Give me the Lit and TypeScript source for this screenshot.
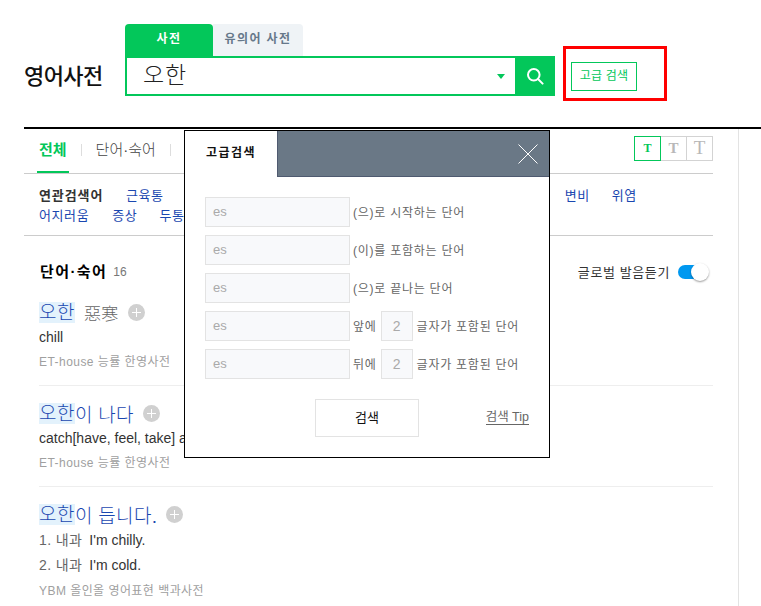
import { LitElement, html, css } from "lit";
import { customElement } from "lit/decorators.js";

@customElement("app-root")
export class AppRoot extends LitElement {
  static styles = css`
    :host { display: block; width: 761px; height: 606px; overflow: hidden; position: relative; background: #fff; font-family: "Liberation Sans","Noto Sans CJK KR",sans-serif; color: #333; }
    * { box-sizing: border-box; }
    .header { height: 127px; padding: 24px 0 0 24px; display: flex; align-items: flex-start; }
    .logo { width: 101px; margin-top: 37px; font-size: 22px; line-height: 32px; font-weight: 500; color: #111; letter-spacing: -0.6px; white-space: nowrap; }
    .tabs { display: flex; height: 32px; }
    .tab { font-size: 12px; font-weight: 700; line-height: 31px; text-align: center; letter-spacing: 1.4px; border-radius: 4px 4px 0 0; }
    .tab.on { width: 88px; background: #03c75a; color: #fff; }
    .tab.off { width: 90px; background: #eff3f6; color: #66788a; border-radius: 0 4px 0 0; }
    .searchrow { display: flex; }
    .box { width: 390px; height: 40px; border: 2px solid #03c75a; border-right: 0; display: flex; align-items: center; padding: 0 10px 0 16px; justify-content: space-between; }
    .query { font-size: 23px; color: #222; line-height: 34px; font-weight: 300; letter-spacing: 0.8px; margin-top: -2px; }
    .caret { width: 0; height: 0; border: 4px solid transparent; border-top: 5px solid #03c75a; border-bottom: 0; }
    .go { width: 40px; height: 40px; background: #03c75a; display: flex; align-items: center; justify-content: center; }
    .annot { margin: 22px 0 0 8px; width: 104px; height: 55px; border: 3px solid #f00; padding: 13px 0 0 5px; }
    .adv { width: 66px; height: 29px; border: 1px solid #03c75a; color: #03c75a; font-size: 12px; line-height: 27px; text-align: center; letter-spacing: 0.2px; }
    .main { margin-left: 24px; border-top: 2px solid #000; height: 479px; }
    .col { width: 715px; height: 100%; border-right: 1px solid #e3e3e3; padding-right: 25px; }
    .nav { height: 45px; border-bottom: 1px solid #ccc; padding: 0 0 3px 15px; display: flex; align-items: center; }
    .item { font-size: 15px; line-height: 20px; color: #444; font-weight: 300; }
    .item.all { color: #03c75a; font-weight: 700; position: relative; }
    .item.all::after { content: ""; position: absolute; left: -2px; right: -2px; bottom: -13px; height: 2px; background: #03c75a; }
    .sep { width: 1px; height: 12px; background: #ddd; margin: 0 14px 0 14px; }
    .sizes { margin-left: auto; display: flex; margin-top: -3px; }
    .sz { height: 25px; border: 1px solid #d3d3d3; border-left: 0; width: 26px; display: flex; align-items: center; justify-content: center; color: #b8b8b8; font-family: "Liberation Serif", serif; font-weight: 700; }
    .sz.a { width: 27px; border: 1px solid #03c75a; color: #03c75a; font-size: 12px; }
    .sz.b { font-size: 15px; }
    .sz.c { font-size: 19px; font-weight: 400; }
    .rel { height: 62px; border-bottom: 1px solid #ccc; padding: 12px 0 0 15px; font-size: 13px; line-height: 20px; }
    .relrow { display: flex; }
    .rel b { width: 87px; color: #333; font-size: 13px; letter-spacing: 0.9px; white-space: nowrap; }
    .lnk { color: #1a47b0; letter-spacing: 0.6px; }
    .gap { width: 401px; }
    .m1 { margin-left: 22px; }
    .m2 { margin-left: 23px; }
    .m3 { margin-left: 22px; }
    .secthead { display: flex; align-items: center; padding: 7px 4px 0 16px; height: 64px; }
    .secthead b { font-size: 15px; color: #000; line-height: 20px; letter-spacing: 1.4px; }
    .count { font-size: 12px; color: #777; margin-left: 6px; }
    .glob { margin-left: auto; font-size: 13px; color: #333; letter-spacing: 0.6px; }
    .toggle { width: 31px; height: 18px; margin-left: 8px; position: relative; }
    .track { position: absolute; left: 0; top: 2px; width: 26px; height: 14px; border-radius: 7px; background: #0098f0; }
    .knob { position: absolute; right: 0; top: 0; width: 18px; height: 18px; border-radius: 50%; background: #fff; box-shadow: 0 1px 2px rgba(0,0,0,.4); }
    .list { padding-left: 15px; }
    .e { border-bottom: 1px solid #eee; padding: 15px 0 11px; white-space: nowrap; }
    .e.first { padding-top: 0; }
    .e.last { border-bottom: 0; }
    .word { display: flex; align-items: center; height: 25px; font-size: 19px; color: #1a47b0; letter-spacing: 0.3px; font-weight: 300; }
    .hl { background: #e3f2fc; line-height: 21px; height: 21px; letter-spacing: 0.5px; }
    .han { color: #666; font-size: 17px; margin-left: 9px; }
    .plus { width: 17px; height: 17px; border-radius: 50%; background: #d0d0d0; margin-left: 9px; display: flex; align-items: center; justify-content: center; }
    .def { font-size: 14px; line-height: 24px; color: #333; }
    .def.tall { line-height: 25px; }
    .def.t1 { margin-top: 1px; }
    .def i { font-style: normal; margin-right: 7px; color: #666; letter-spacing: 0.4px; }
    .src { font-size: 12px; line-height: 24px; padding-top: 1px; color: #a0a0a0; letter-spacing: 0.45px; }
    .modal { position: absolute; left: 184px; top: 130px; width: 366px; height: 328px; background: #fff; border: 1px solid #000; }
    .mhead { display: flex; height: 46px; }
    .mtab { width: 92px; font-size: 12px; font-weight: 700; color: #111; line-height: 44px; text-align: center; letter-spacing: 1.5px; }
    .mbar { flex: 1; background: #6a7886; border-left: 1px solid #4f5a70; border-bottom: 1px solid #4f5a70; display: flex; align-items: center; justify-content: flex-end; padding-right: 11px; }
    .mbody { padding: 20px 20px 0; display: flex; flex-direction: column; gap: 8px; }
    .row { display: flex; align-items: center; font-size: 12px; color: #666; height: 30px; letter-spacing: 0.75px; white-space: nowrap; }
    .lbl { margin-top: -2px; }
    .inp { width: 145px; height: 30px; background: #f8f9fb; border: 1px solid #e3e3e3; color: #aaa; font-size: 13px; line-height: 28px; padding-left: 7px; margin-right: 3px; letter-spacing: 0; }
    .num { width: 32px; height: 30px; background: #f8f9fb; border: 1px solid #e3e3e3; color: #aaa; font-size: 14px; line-height: 28px; text-align: center; margin: 0 4px; letter-spacing: 0; }
    .mfoot { display: flex; align-items: center; padding: 20px 20px 0 130px; }
    .btn { width: 104px; height: 38px; border: 1px solid #e3e3e3; font-size: 13px; color: #111; line-height: 36px; text-align: center; }
    .tip { margin-left: auto; font-size: 12.5px; color: #666; border-bottom: 1px solid #666; line-height: 14px; margin-top: -2px; }
  `;

  plus() {
    return html`<span class="plus"><svg width="9" height="9" viewBox="0 0 9 9" stroke="#fff"><path d="M4.5 0v9M0 4.5h9"/></svg></span>`;
  }

  render() {
    const rows = ["(으)로 시작하는 단어", "(이)를 포함하는 단어", "(으)로 끝나는 단어"];
    return html`
      <div class="header">
        <div class="logo">영어사전</div>
        <div>
          <div class="tabs"><div class="tab on">사전</div><div class="tab off">유의어 사전</div></div>
          <div class="searchrow">
            <div class="box"><span class="query">오한</span><span class="caret"></span></div>
            <div class="go">
              <svg width="18" height="18" viewBox="0 0 18 18" fill="none" stroke="#fff" stroke-width="2"><circle cx="7.8" cy="7.8" r="5.8"/><path d="M12 12l4.6 4.6" stroke-linecap="round"/></svg>
            </div>
          </div>
        </div>
        <div class="annot"><div class="adv">고급 검색</div></div>
      </div>
      <div class="main"><div class="col">
        <div class="nav">
          <span class="item all">전체</span><span class="sep"></span><span class="item">단어·숙어</span><span class="sep"></span>
          <div class="sizes"><div class="sz a">T</div><div class="sz b">T</div><div class="sz c">T</div></div>
        </div>
        <div class="rel">
          <div class="relrow"><b>연관검색어</b><span class="lnk">근육통</span><span class="gap"></span><span class="lnk">변비</span><span class="lnk m1">위염</span></div>
          <div class="relrow"><span class="lnk">어지러움</span><span class="lnk m2">증상</span><span class="lnk m3">두통</span></div>
        </div>
        <div class="secthead"><b>단어·숙어</b><span class="count">16</span><span class="glob">글로벌 발음듣기</span><span class="toggle"><span class="track"></span><span class="knob"></span></span></div>
        <div class="list">
          <div class="e first">
            <div class="word"><span class="hl">오한</span><span class="han">惡寒</span>${this.plus()}</div>
            <div class="def">chill</div>
            <div class="src">ET-house 능률 한영사전</div>
          </div>
          <div class="e">
            <div class="word"><span class="hl">오한</span>이 나다${this.plus()}</div>
            <div class="def">catch[have, feel, take] a chill</div>
            <div class="src">ET-house 능률 한영사전</div>
          </div>
          <div class="e last">
            <div class="word"><span class="hl">오한</span>이 듭니다.${this.plus()}</div>
            <div class="def tall t1"><i>1. 내과</i>I'm chilly.</div>
            <div class="def tall"><i>2. 내과</i>I'm cold.</div>
            <div class="src">YBM 올인올 영어표현 백과사전</div>
          </div>
        </div>
      </div></div>
      <div class="modal">
        <div class="mhead">
          <div class="mtab">고급검색</div>
          <div class="mbar"><svg width="20" height="20" viewBox="0 0 20 20" stroke="#fff" stroke-width="1"><path d="M0.5 0.5l19 19M19.5 0.5l-19 19"/></svg></div>
        </div>
        <div class="mbody">
          ${rows.map((r) => html`<div class="row"><div class="inp">es</div><span class="lbl">${r}</span></div>`)}
          <div class="row"><div class="inp">es</div><span class="lbl">앞에</span><div class="num">2</div><span class="lbl">글자가 포함된 단어</span></div>
          <div class="row"><div class="inp">es</div><span class="lbl">뒤에</span><div class="num">2</div><span class="lbl">글자가 포함된 단어</span></div>
        </div>
        <div class="mfoot"><div class="btn">검색</div><span class="tip">검색 Tip</span></div>
      </div>
    `;
  }
}
